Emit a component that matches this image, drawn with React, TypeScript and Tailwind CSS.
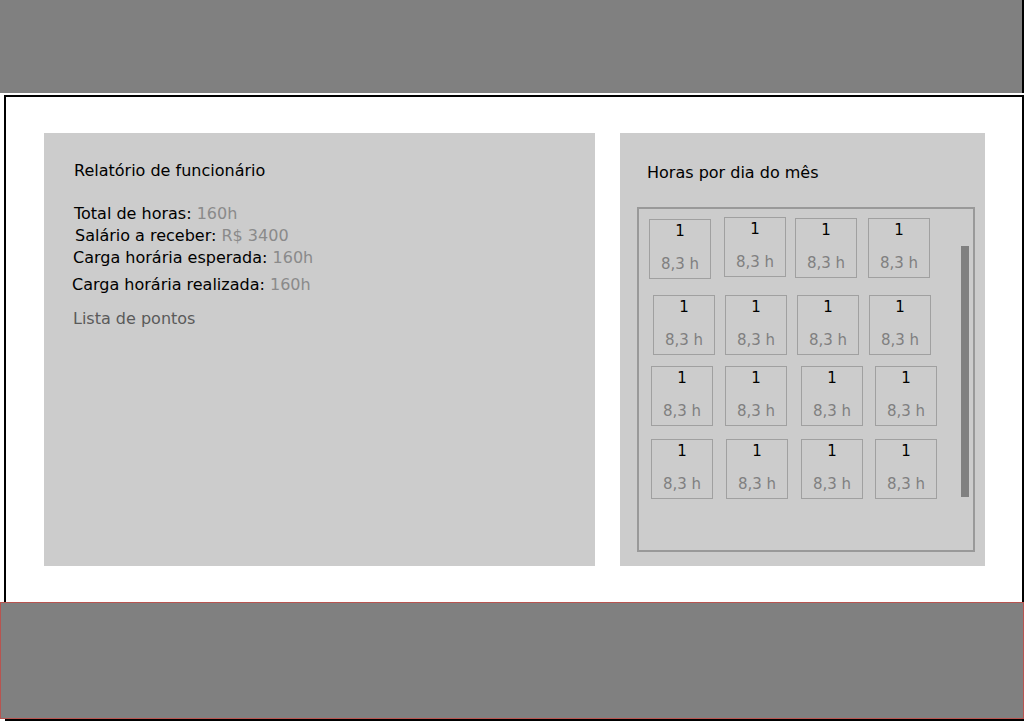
const rows = [
  {
    row: "mt-[8px]",
    cells: [
      "ml-[10px] mt-[2px]",
      "ml-[13px] mt-0",
      "ml-[9px] mt-[1px]",
      "ml-[11px] mt-[1px]",
    ],
  },
  {
    row: "mt-[16px]",
    cells: ["ml-[14px]", "ml-[10px]", "ml-[10px]", "ml-[10px]"],
  },
  {
    row: "mt-[11px]",
    cells: ["ml-[12px]", "ml-[12px]", "ml-[14px]", "ml-[12px]"],
  },
  {
    row: "mt-[13px]",
    cells: ["ml-[12px]", "ml-[13px]", "ml-[13px]", "ml-[12px]"],
  },
];

function DayCell({ className }: { className: string }) {
  return (
    <div
      className={`${className} flex h-[60px] w-[62px] shrink-0 flex-col items-center border border-[#a0a0a0] text-[15px] leading-[20px]`}
    >
      <span className="mt-[1px] text-black">1</span>
      <span className="mt-[13px] text-[#808080]">8,3 h</span>
    </div>
  );
}

export default function App() {
  return (
    <div className="h-[721px] w-[1030px] overflow-hidden bg-white font-['DejaVu_Sans',sans-serif]">
      <div className="w-[1024px] border-r-2 border-black">
        <div className="h-[93px] w-[1022px] bg-[#808080]" />
      </div>

      <main className="ml-[4px] mt-[2px] h-[507px] w-[1020px] border-x-2 border-t-2 border-black">
        <div className="flex pl-[38px] pt-[36px]">
          <section className="h-[433px] w-[551px] bg-[#cccccc] pt-[27px] text-[16px] leading-[22px]">
            <h2 className="ml-[30px] text-black">Relatório de funcionário</h2>
            <p className="ml-[30px] mt-[21px] text-black">
              Total de horas: <span className="text-[#8a8a8a]">160h</span>
            </p>
            <p className="ml-[31px] text-black">
              Salário a receber: <span className="text-[#8a8a8a]">R$ 3400</span>
            </p>
            <p className="ml-[29px] text-black">
              Carga horária esperada: <span className="text-[#8a8a8a]">160h</span>
            </p>
            <p className="ml-[28px] mt-[5px] text-black">
              Carga horária realizada: <span className="text-[#8a8a8a]">160h</span>
            </p>
            <p className="ml-[29px] mt-[12px] text-[#5a5a5a]">Lista de pontos</p>
          </section>

          <section className="ml-[25px] h-[433px] w-[365px] bg-[#cccccc] pt-[29px]">
            <h2 className="ml-[27px] text-[16px] leading-[22px] text-black">
              Horas por dia do mês
            </h2>
            <div className="relative ml-[17px] mt-[23px] h-[345px] w-[338px] border-2 border-[#999999]">
              {rows.map((r, i) => (
                <div key={i} className={`${r.row} flex items-start`}>
                  {r.cells.map((c, j) => (
                    <DayCell key={j} className={c} />
                  ))}
                </div>
              ))}
              <div className="absolute left-[322px] top-[37px] h-[251px] w-[8px] bg-[#808080]" />
            </div>
          </section>
        </div>
      </main>

      <footer className="h-[117px] w-[1024px] border border-[#b85450] bg-[#808080]" />
      <div className="ml-[5px] h-[2px] w-[1019px] bg-black" />
    </div>
  );
}
